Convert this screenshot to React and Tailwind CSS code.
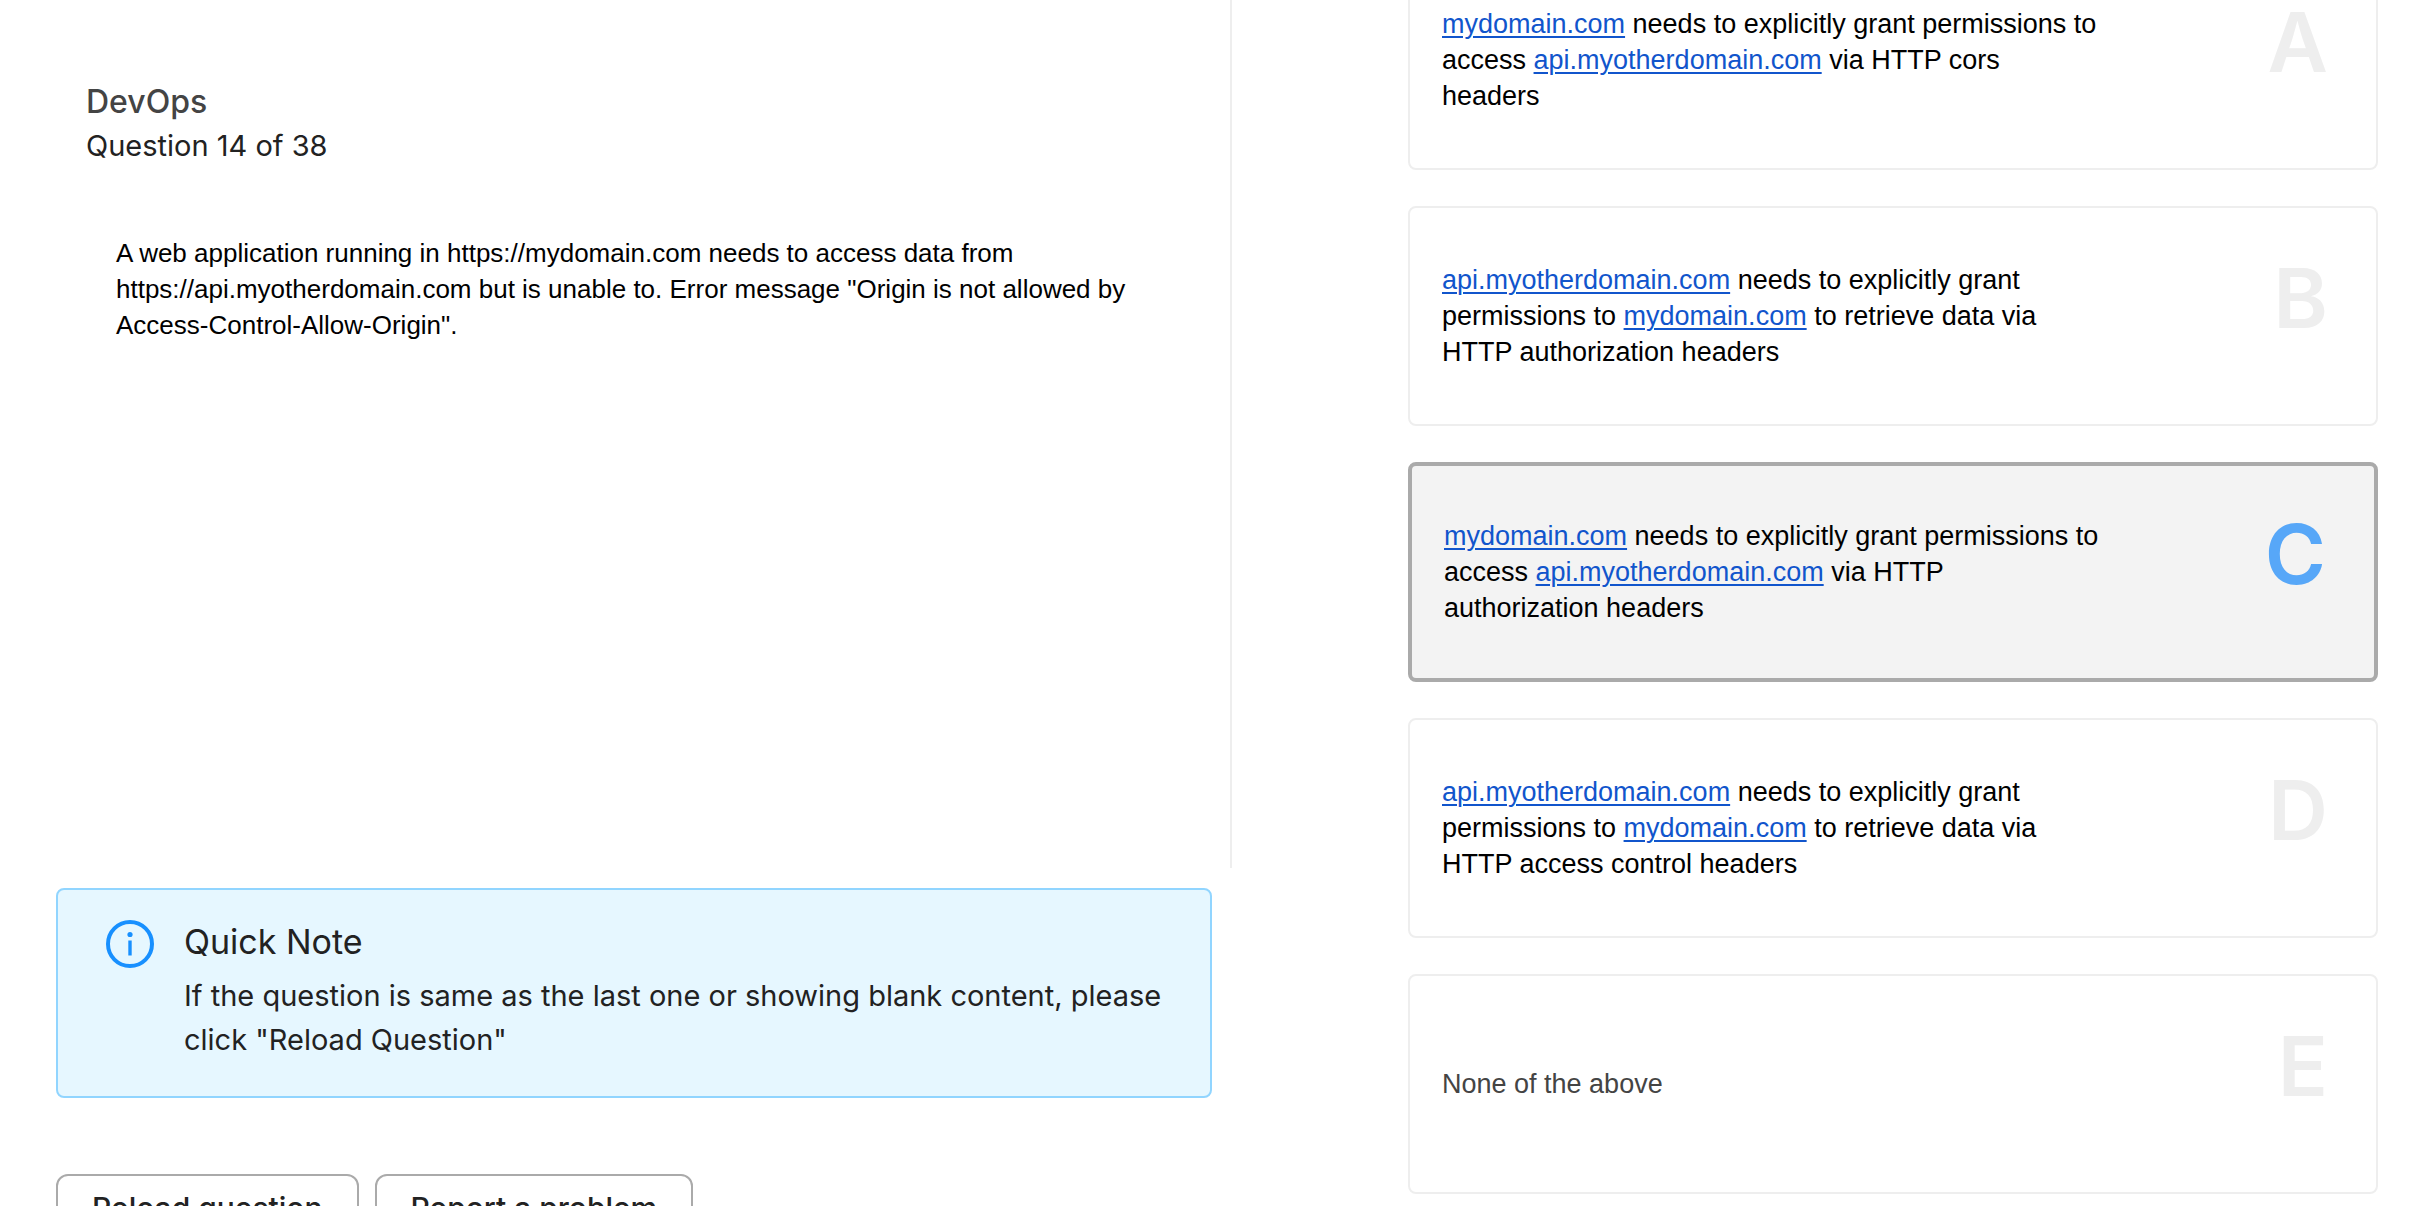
import React, { useState } from "react";

const LinkText = ({ children }) => (
  <a href={`http://${children}`} className="text-[#1155cc] underline decoration-2 underline-offset-3">
    {children}
  </a>
);

const OTHER = <LinkText>api.myotherdomain.com</LinkText>;
const MINE = <LinkText>mydomain.com</LinkText>;

const OPTIONS = [
  {
    id: "A",
    body: <>{MINE} needs to explicitly grant permissions to<br />access {OTHER} via HTTP cors<br />headers</>,
  },
  {
    id: "B",
    body: <>{OTHER} needs to explicitly grant<br />permissions to {MINE} to retrieve data via<br />HTTP authorization headers</>,
  },
  {
    id: "C",
    body: <>{MINE} needs to explicitly grant permissions to<br />access {OTHER} via HTTP<br />authorization headers</>,
  },
  {
    id: "D",
    body: <>{OTHER} needs to explicitly grant<br />permissions to {MINE} to retrieve data via<br />HTTP access control headers</>,
  },
  { id: "E", body: "None of the above", plain: true },
];

function Option({ option, selected, onSelect }) {
  return (
    <label
      className={`flex h-[220px] shrink-0 cursor-pointer items-center justify-between rounded-lg px-8 ${
        selected ? "border-4 border-[#aaaaaa] bg-[#f3f3f3]" : "border-2 border-[#eeeeee] bg-white"
      }`}
    >
      <input
        type="radio"
        name="answer"
        value={option.id}
        checked={selected}
        onChange={onSelect}
        className="sr-only"
      />
      <span
        className={`w-3/4 font-["Liberation_Sans",Arial,sans-serif] text-[27px] leading-9 ${
          option.plain ? "text-[#444444]" : "text-black"
        }`}
      >
        {option.body}
      </span>
      <span
        className={`mr-4 mb-9 text-[83px] leading-none font-semibold ${
          selected ? "text-[#57a7f8]" : "text-[#eeeeee]"
        }`}
      >
        {option.id}
      </span>
    </label>
  );
}

function InfoIcon() {
  return (
    <svg viewBox="0 0 48 48" className="size-12 shrink-0" fill="none" aria-hidden="true">
      <circle cx="24" cy="24" r="22" stroke="#1890ff" strokeWidth="4" />
      <circle cx="24" cy="14.5" r="2.6" fill="#1890ff" />
      <path d="M24 20.5v15" stroke="#1890ff" strokeWidth="3.4" />
    </svg>
  );
}

function ActionButton({ children }) {
  return (
    <button
      type="button"
      className="h-17 cursor-pointer rounded-xl border-2 border-[#aaaaaa] px-[34px] text-[30px] font-medium whitespace-nowrap text-[#222222]"
    >
      {children}
    </button>
  );
}

export default function App() {
  const [answer, setAnswer] = useState("C");

  return (
    <main className="grid h-screen grid-cols-[1232fr_1200fr] overflow-hidden bg-white font-[Inter,sans-serif] text-[#222222]">
      <div className="flex min-w-0 flex-col">
        <section className="min-h-[72vh] border-r-2 border-[#eeeeee] pt-20 pr-20 pl-[86px]">
          <h1 className="text-[32px] leading-11 font-medium text-[#444444]">DevOps</h1>
          <p className="text-[29px] leading-11">Question 14 of 38</p>
          <p className='mt-[67px] ml-[30px] font-["Liberation_Sans",Arial,sans-serif] text-[26px] leading-9 text-black'>
            A web application running in https://mydomain.com needs to access data from
            https://api.myotherdomain.com but is unable to. Error message "Origin is not allowed by
            Access-Control-Allow-Origin".
          </p>
        </section>

        <div
          role="note"
          className="mt-5 mr-5 ml-14 flex gap-[30px] rounded-lg border-2 border-[#91d5ff] bg-[#e6f7ff] py-[30px] pr-10 pl-12"
        >
          <InfoIcon />
          <div className="pb-1">
            <h2 className="text-[34px] leading-11">Quick Note</h2>
            <p className="mt-[10px] text-[29px] leading-11">
              If the question is same as the last one or showing blank content, please click "Reload
              Question"
            </p>
          </div>
        </div>

        <div className="mt-[76px] ml-14 flex gap-4">
          <ActionButton>Reload question</ActionButton>
          <ActionButton>Report a problem</ActionButton>
        </div>
      </div>

      <fieldset className="flex h-screen min-w-0 flex-col justify-end gap-9 overflow-hidden pr-[54px] pb-3 pl-44">
        <legend className="sr-only">Answers</legend>
        {OPTIONS.map((option) => (
          <Option
            key={option.id}
            option={option}
            selected={answer === option.id}
            onSelect={() => setAnswer(option.id)}
          />
        ))}
      </fieldset>
    </main>
  );
}
